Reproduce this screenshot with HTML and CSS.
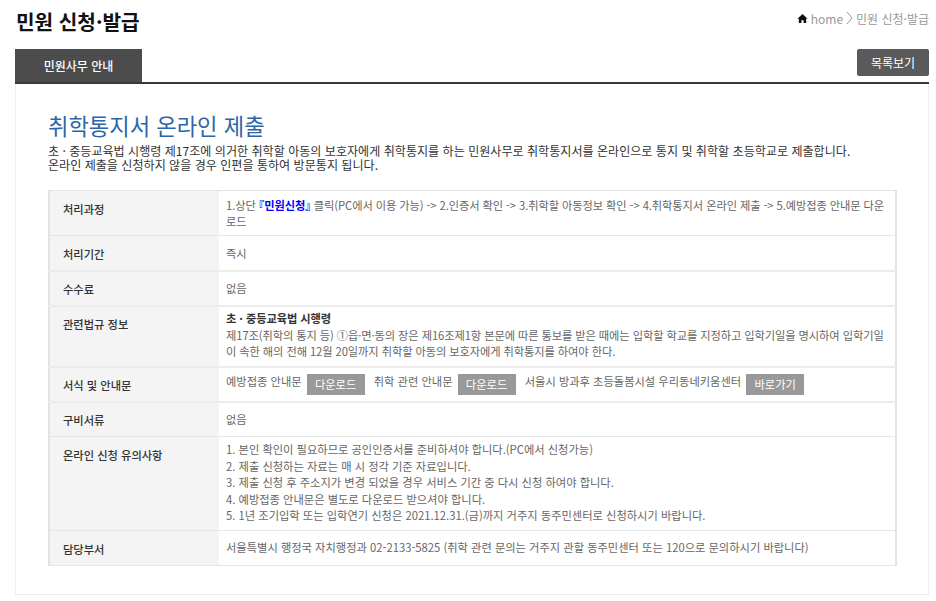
FILE: index.html
```html
<!DOCTYPE html>
<html lang="ko">
<head>
  <meta name="viewport" content="width=device-width, initial-scale=1">
  <title>민원 신청·발급</title>
  <link rel="stylesheet" href="styles.css">
</head>
<body>
  <header class="page-head">
    <h1>민원 신청·발급</h1>
    <div class="crumb">
      <svg class="home-icon" viewBox="0 0 12 12"><path d="M6 1 L11.5 6.2 L10 6.2 L10 11 L7.2 11 L7.2 7.8 L4.8 7.8 L4.8 11 L2 11 L2 6.2 L0.5 6.2 Z"/></svg>
      <span>home</span>
      <svg class="crumb-arrow" viewBox="0 0 7 14"><path d="M1 1 L6 7 L1 13"/></svg>
      <span>민원 신청·발급</span>
    </div>
  </header>

  <div class="tab-bar">
    <div class="tab">민원사무 안내</div>
    <a class="list-btn">목록보기</a>
  </div>

  <main class="panel">
    <h2>취학통지서 온라인 제출</h2>
    <p class="intro">초 · 중등교육법 시행령 제17조에 의거한 취학할 아동의 보호자에게 취학통지를 하는 민원사무로 취학통지서를 온라인으로 통지 및 취학할 초등학교로 제출합니다.<br>온라인 제출을 신청하지 않을 경우 인편을 통하여 방문통지 됩니다.</p>

    <table class="info">
      <tr class="r1">
        <th>처리과정</th>
        <td class="tight">1.상단 <b class="link">『민원신청』</b> 클릭(PC에서 이용 가능) -&gt; 2.인증서 확인 -&gt; 3.취학할 아동정보 확인 -&gt; 4.취학통지서 온라인 제출 -&gt; 5.예방접종 안내문 다운로드</td>
      </tr>
      <tr class="r2 thick">
        <th>처리기간</th>
        <td>즉시</td>
      </tr>
      <tr class="r2 thick">
        <th>수수료</th>
        <td>없음</td>
      </tr>
      <tr class="r4 thick lift">
        <th>관련법규 정보</th>
        <td class="tight"><b class="law">초 · 중등교육법 시행령</b><br>제17조(취학의 통지 등) ①읍·면·동의 장은 제16조제1항 본문에 따른 통보를 받은 때에는 입학할 학교를 지정하고 입학기일을 명시하여 입학기일이 속한 해의 전해 12월 20일까지 취학할 아동의 보호자에게 취학통지를 하여야 한다.</td>
      </tr>
      <tr class="r2 thick">
        <th>서식 및 안내문</th>
        <td class="files">
          <span>예방접종 안내문</span><a class="gray-btn">다운로드</a>
          <span>취학 관련 안내문</span><a class="gray-btn">다운로드</a>
          <span>서울시 방과후 초등돌봄시설 우리동네키움센터</span><a class="gray-btn">바로가기</a>
        </td>
      </tr>
      <tr class="r2">
        <th>구비서류</th>
        <td>없음</td>
      </tr>
      <tr class="r7 lift">
        <th>온라인 신청 유의사항</th>
        <td>1. 본인 확인이 필요하므로 공인인증서를 준비하셔야 합니다.(PC에서 신청가능)<br>2. 제출 신청하는 자료는 매 시 정각 기준 자료입니다.<br>3. 제출 신청 후 주소지가 변경 되었을 경우 서비스 기간 중 다시 신청 하여야 합니다.<br>4. 예방접종 안내문은 별도로 다운로드 받으셔야 합니다.<br>5. 1년 조기입학 또는 입학연기 신청은 2021.12.31.(금)까지 거주지 동주민센터로 신청하시기 바랍니다.</td>
      </tr>
      <tr class="r2 lift">
        <th>담당부서</th>
        <td>서울특별시 행정국 자치행정과 02-2133-5825 (취학 관련 문의는 거주지 관할 동주민센터 또는 120으로 문의하시기 바랍니다)</td>
      </tr>
    </table>
  </main>
</body>
</html>
```

FILE: styles.css
```css
* { box-sizing: border-box; }
html, body { height: 100%; }
body {
  margin: 0;
  padding: 0 7px 0 15px;
  overflow: hidden;
  background: #fff;
  color: #666;
  font-family: "Noto Sans CJK KR", "Noto Sans", sans-serif;
  font-size: 11.25px;
}
.page-head {
  display: flex;
  justify-content: space-between;
  height: 49px;
  padding: 8px 0 0 1px;
}
h1 {
  margin: 0;
  color: #111;
  font-size: 20.2px;
  line-height: 28px;
  font-weight: 700;
}
.crumb {
  display: flex;
  align-items: center;
  gap: 3px;
  height: 20px;
  color: #999;
  font-size: 12px;
}
.home-icon { width: 11px; height: 11px; fill: #111; }
.crumb-arrow { width: 7px; height: 14px; fill: none; stroke: #999; stroke-width: 1; }
.tab-bar {
  display: flex;
  justify-content: space-between;
  height: 35px;
  border-bottom: 2px solid #3a3a3a;
}
.tab {
  width: 127px;
  height: 33px;
  background: #4c4c4c;
  color: #fff;
  font-size: 12px;
  font-weight: 500;
  line-height: 33px;
  text-align: center;
}
.list-btn {
  width: 72px;
  height: 27px;
  background: #5a5a5a;
  border-radius: 2px;
  color: #fff;
  font-size: 12px;
  line-height: 27px;
  text-align: center;
}
.panel {
  height: 511px;
  padding: 0 32px 0 32px;
  border: 1px solid #eee;
  border-top: 0;
}
h2 {
  margin: 0;
  padding-top: 26px;
  color: #2a66a8;
  font-size: 22.2px;
  line-height: 30px;
  font-weight: 400;
}
.intro {
  margin: 4px 0 18px;
  color: #333;
  font-size: 12.07px;
  line-height: 14px;
}
.info {
  width: 849px;
  border-collapse: collapse;
  border-style: solid;
  border-color: #e3e3e3;
  border-width: 1px 2px;
}
.info th, .info td {
  border-bottom: 1px solid #e6e6e6;
  text-align: left;
  line-height: 16.5px;
}
.thick th, .thick td { border-bottom-width: 2px; border-bottom-color: #ececec; }
.info th {
  width: 170px;
  padding: 10px 10px 0 13px;
  background: #f4f4f4;
  color: #333;
  font-weight: 500;
  vertical-align: top;
  line-height: 16px;
}
.info .thick + tr th { padding-top: 9px; }
.info td {
  padding: 0 8px 0 7px;
  vertical-align: middle;
}
.info .lift td { padding-bottom: 2px; }
.info .tight { letter-spacing: -0.1px; }
.r1 { height: 45px; }
.r2 { height: 35px; }
.r4 { height: 61px; }
.r7 { height: 94px; }
.link {
  color: #00f;
  font-weight: 700;
  font-feature-settings: "halt";
}
.law { color: #333; font-weight: 700; }
.files span { margin-right: 5px; }
.gray-btn {
  display: inline-block;
  width: 58px;
  height: 21px;
  margin-right: 6px;
  background: #999;
  color: #fff;
  line-height: 21px;
  text-align: center;
  vertical-align: -3px;
}
```
